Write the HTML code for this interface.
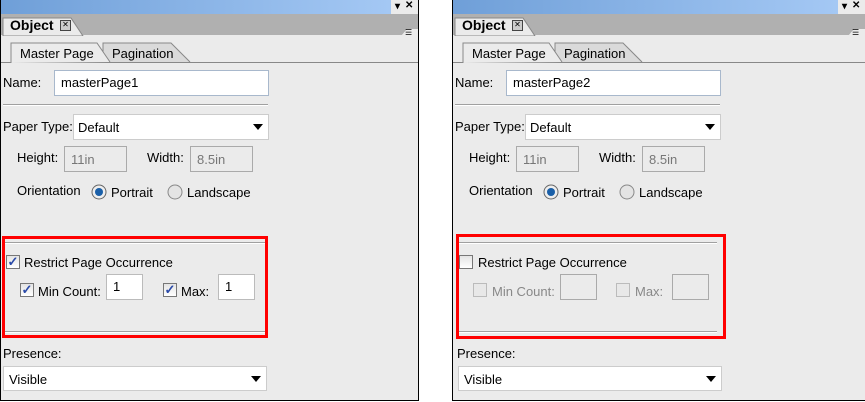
<!DOCTYPE html><html><head><style>
body{margin:0;width:865px;height:402px;background:#fff;position:relative;overflow:hidden;font-family:"Liberation Sans",sans-serif;font-size:12px;color:#000}
.p{position:absolute;top:0;width:417px;height:400px;border:1px solid #000;border-top:0;background:#ebebeb;overflow:hidden}
.a{position:absolute}
.tb{left:0;top:0;width:390px;height:14px;background:linear-gradient(90deg,#6f9fd8,#a4c8f4)}
.tb2{left:390px;top:0;width:30px;height:14px;background:#ebebeb;font-size:10px;font-weight:bold}
.ts{left:0;top:14px;width:417px;height:21px;background:#b0b0b0}
.inp{background:#fff;border:1px solid #a8b8cc;box-sizing:border-box}
.dis{background:#ebebeb;border:1px solid #aaa;box-sizing:border-box;color:#777}
.cb{width:14px;height:14px;border:1px solid #777;background:linear-gradient(#e4e4e4,#fff);box-sizing:border-box;font-size:13px;line-height:12px;color:#2a4aa8;text-align:center;font-weight:bold}
.cbd{border-color:#bbb;background:#e8e8e8}
.line{height:1px;background:#a0a0a0;border-bottom:1px solid #fff}
.arr{position:absolute;right:5px;top:9px;width:0;height:0;border-left:5px solid transparent;border-right:5px solid transparent;border-top:6px solid #000}
</style></head><body>
<!-- panel template -->
<div class="p" style="left:0">
<div class="a tb"></div><div class="a tb2"><span style="position:absolute;left:4px;top:1px">▾</span><span style="position:absolute;left:14px;top:0">✕</span></div>
<div class="a ts"></div>
<svg class="a" style="left:0;top:14px" width="420" height="22"><path d="M2 22V4H70L82 22Z" fill="#ebebeb" stroke="#888"/><path d="M400 22L406 15H417V22Z" fill="#ebebeb"/><text x="404" y="21" font-size="8">☰</text></svg>
<div class="a" style="left:9px;top:17px;font-weight:bold;font-size:14px">Object</div>
<div class="a" style="left:59px;top:20px;width:9px;height:9px;border:1px solid #444;background:#ccc;font-size:8px;line-height:8px;text-align:center">✕</div>
<svg class="a" style="left:0;top:42px" width="420" height="22"><path d="M0 20.5H420" stroke="#888"/><path d="M102 20L102 1H170L189 20" fill="#dadada" stroke="#888"/><path d="M10 21V1H96L109 20" fill="#ebebeb" stroke="#888"/></svg>
<div class="a" style="left:19px;top:46px;font-size:13px">Master Page</div>
<div class="a" style="left:111px;top:46px;font-size:13px">Pagination</div>
<div class="a" style="left:2px;top:75px;font-size:13px">Name:</div>
<div class="a inp" style="left:53px;top:70px;width:215px;height:26px;padding:4px 6px;font-size:13px">masterPage1</div>
<div class="a line" style="left:2px;top:104px;width:265px"></div>
<div class="a" style="left:2px;top:119px;font-size:13px">Paper Type:</div>
<div class="a inp" style="left:72px;top:114px;width:196px;height:26px;padding:5px 4px;font-size:13px;border-color:#ccc">Default<div class="arr"></div></div>
<div class="a" style="left:16px;top:150px;font-size:13px">Height:</div>
<div class="a dis" style="left:63px;top:146px;width:63px;height:26px;padding:5px 6px;font-size:13px">11in</div>
<div class="a" style="left:146px;top:150px;font-size:13px">Width:</div>
<div class="a dis" style="left:189px;top:146px;width:63px;height:26px;padding:5px 6px;font-size:13px">8.5in</div>
<div class="a" style="left:16px;top:183px;font-size:13px">Orientation</div>
<svg class="a" style="left:90px;top:184px" width="16" height="16"><circle cx="8" cy="8" r="7" fill="#eee" stroke="#666"/><circle cx="8" cy="8" r="4" fill="#1a5fa8"/></svg>
<div class="a" style="left:110px;top:185px;font-size:13px">Portrait</div>
<svg class="a" style="left:166px;top:184px" width="16" height="16"><circle cx="8" cy="8" r="7" fill="#e4e4e4" stroke="#888"/></svg>
<div class="a" style="left:186px;top:185px;font-size:13px">Landscape</div>
<div class="a line" style="left:4px;top:242px;width:260px"></div>
<div class="a line" style="left:4px;top:331px;width:260px"></div>
<div class="a cb" style="left:5px;top:255px">✓</div>
<div class="a" style="left:23px;top:255px;font-size:13px">Restrict Page Occurrence</div>
<div class="a cb" style="left:19px;top:283px">✓</div>
<div class="a" style="left:37px;top:284px;font-size:13px">Min Count:</div>
<div class="a inp" style="left:105px;top:274px;width:37px;height:26px;padding:4px 6px;font-size:13px;border-color:#bbb">1</div>
<div class="a cb" style="left:162px;top:283px">✓</div>
<div class="a" style="left:180px;top:284px;font-size:13px">Max:</div>
<div class="a inp" style="left:217px;top:274px;width:37px;height:26px;padding:4px 6px;font-size:13px;border-color:#bbb">1</div>
<div class="a" style="left:1px;top:236px;width:260px;height:96px;border:3px solid #f00"></div>
<div class="a" style="left:2px;top:346px;font-size:13px">Presence:</div>
<div class="a inp" style="left:2px;top:366px;width:264px;height:25px;padding:5px 5px;font-size:13px;border-color:#ccc">Visible<div class="arr"></div></div>
</div>

<div class="p" style="left:452px;width:412px">
<div class="a tb" style="width:385px"></div><div class="a tb2" style="left:385px"><span style="position:absolute;left:4px;top:1px">▾</span><span style="position:absolute;left:14px;top:0">✕</span></div>
<div class="a ts" style="width:412px"></div>
<svg class="a" style="left:0;top:14px" width="420" height="22"><path d="M2 22V4H70L82 22Z" fill="#ebebeb" stroke="#888"/><path d="M395 22L401 15H412V22Z" fill="#ebebeb"/><text x="399" y="21" font-size="8">☰</text></svg>
<div class="a" style="left:9px;top:17px;font-weight:bold;font-size:14px">Object</div>
<div class="a" style="left:59px;top:20px;width:9px;height:9px;border:1px solid #444;background:#ccc;font-size:8px;line-height:8px;text-align:center">✕</div>
<svg class="a" style="left:0;top:42px" width="420" height="22"><path d="M0 20.5H420" stroke="#888"/><path d="M102 20L102 1H170L189 20" fill="#dadada" stroke="#888"/><path d="M10 21V1H96L109 20" fill="#ebebeb" stroke="#888"/></svg>
<div class="a" style="left:19px;top:46px;font-size:13px">Master Page</div>
<div class="a" style="left:111px;top:46px;font-size:13px">Pagination</div>
<div class="a" style="left:2px;top:75px;font-size:13px">Name:</div>
<div class="a inp" style="left:53px;top:70px;width:215px;height:26px;padding:4px 6px;font-size:13px">masterPage2</div>
<div class="a line" style="left:2px;top:104px;width:265px"></div>
<div class="a" style="left:2px;top:119px;font-size:13px">Paper Type:</div>
<div class="a inp" style="left:72px;top:114px;width:196px;height:26px;padding:5px 4px;font-size:13px;border-color:#ccc">Default<div class="arr"></div></div>
<div class="a" style="left:16px;top:150px;font-size:13px">Height:</div>
<div class="a dis" style="left:63px;top:146px;width:63px;height:26px;padding:5px 6px;font-size:13px">11in</div>
<div class="a" style="left:146px;top:150px;font-size:13px">Width:</div>
<div class="a dis" style="left:189px;top:146px;width:63px;height:26px;padding:5px 6px;font-size:13px">8.5in</div>
<div class="a" style="left:16px;top:183px;font-size:13px">Orientation</div>
<svg class="a" style="left:90px;top:184px" width="16" height="16"><circle cx="8" cy="8" r="7" fill="#eee" stroke="#666"/><circle cx="8" cy="8" r="4" fill="#1a5fa8"/></svg>
<div class="a" style="left:110px;top:185px;font-size:13px">Portrait</div>
<svg class="a" style="left:166px;top:184px" width="16" height="16"><circle cx="8" cy="8" r="7" fill="#e4e4e4" stroke="#888"/></svg>
<div class="a" style="left:186px;top:185px;font-size:13px">Landscape</div>
<div class="a line" style="left:4px;top:242px;width:260px"></div>
<div class="a line" style="left:4px;top:331px;width:260px"></div>
<div class="a cb" style="left:6px;top:255px"></div>
<div class="a" style="left:25px;top:255px;font-size:13px">Restrict Page Occurrence</div>
<div class="a cb cbd" style="left:20px;top:283px"></div>
<div class="a" style="left:39px;top:284px;font-size:13px;color:#888">Min Count:</div>
<div class="a dis" style="left:107px;top:274px;width:37px;height:26px"></div>
<div class="a cb cbd" style="left:163px;top:283px"></div>
<div class="a" style="left:182px;top:284px;font-size:13px;color:#888">Max:</div>
<div class="a dis" style="left:219px;top:274px;width:37px;height:26px"></div>
<div class="a" style="left:3px;top:234px;width:264px;height:99px;border:3px solid #f00"></div>
<div class="a" style="left:4px;top:346px;font-size:13px">Presence:</div>
<div class="a inp" style="left:5px;top:366px;width:264px;height:25px;padding:5px 5px;font-size:13px;border-color:#ccc">Visible<div class="arr"></div></div>
</div>
</body></html>
